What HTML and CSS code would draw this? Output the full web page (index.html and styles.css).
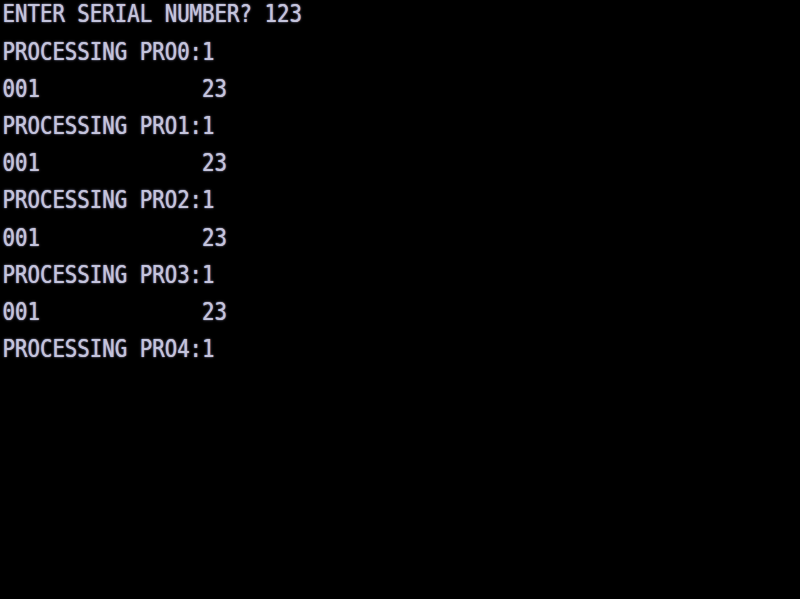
FILE: index.html
```html
<!DOCTYPE html>
<html>
<head>
<meta charset="utf-8">
<link rel="stylesheet" href="styles.css">
</head>
<body>
<main class="screen">
<pre class="term">ENTER SERIAL NUMBER? 123
PROCESSING PRO0:1
001             23
PROCESSING PRO1:1
001             23
PROCESSING PRO2:1
001             23
PROCESSING PRO3:1
001             23
PROCESSING PRO4:1</pre>
</main>
</body>
</html>
```
FILE: styles.css
```css
html, body {
  margin: 0;
  padding: 0;
  background: #000;
  height: 100%;
  overflow: hidden;
}
.screen {
  width: 800px;
  height: 599px;
  background: #000;
  overflow: hidden;
}
.term {
  margin: -4px 0 0 0;
  padding: 0 0 0 2.5px;
  font-family: "DejaVu Sans Mono", "Liberation Mono", monospace;
  font-size: 20.72px;
  line-height: 30.95px;
  color: #c4c4dc;
  text-shadow: 0 0 1px rgba(196, 196, 225, 0.9), 0 0 2.5px rgba(180, 180, 225, 0.5);
  transform: scaleY(1.2);
  transform-origin: 0 0;
  white-space: pre;
}
```
